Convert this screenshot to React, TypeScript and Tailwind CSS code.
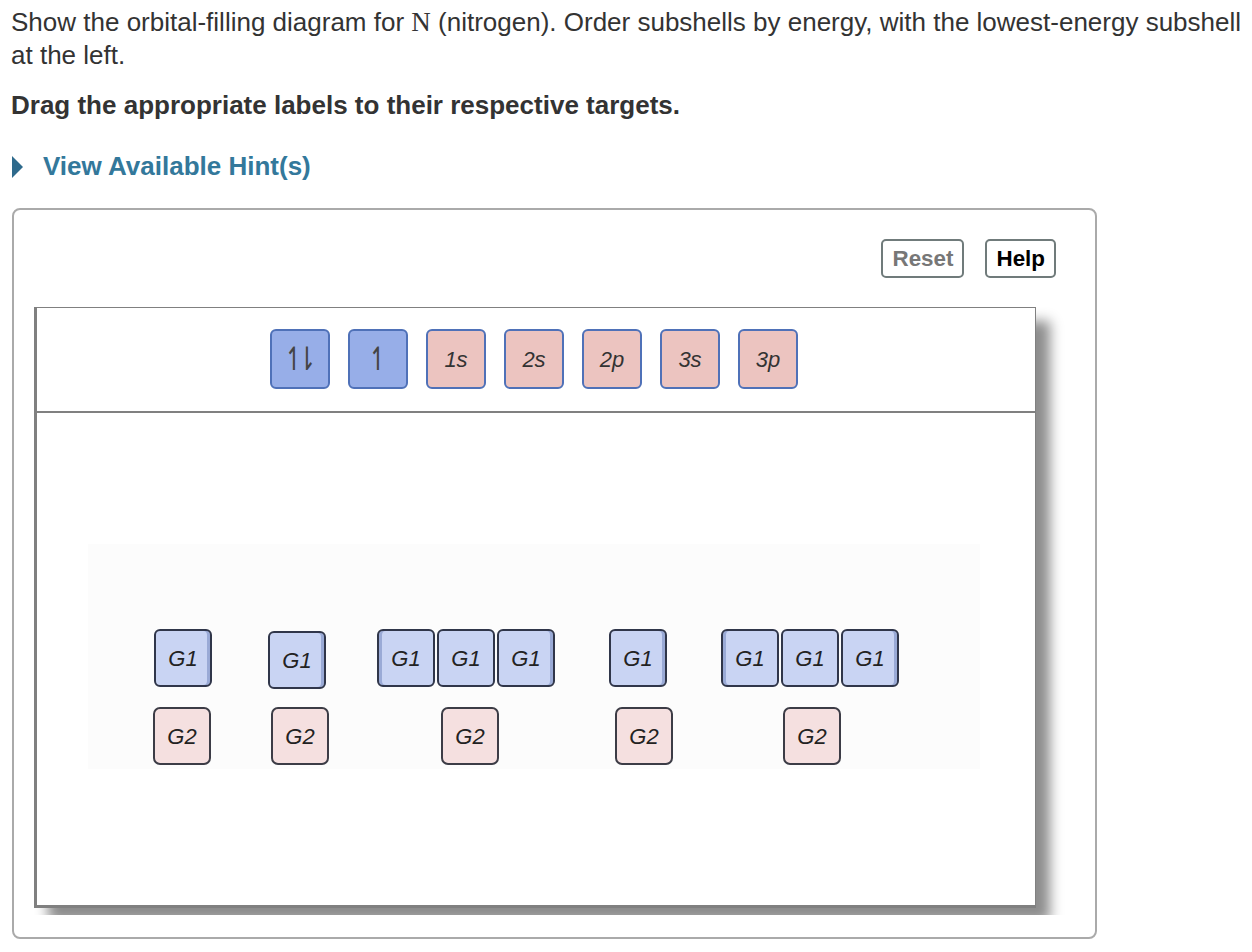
import React from 'react';

const sans = "font-['Liberation_Sans','Helvetica',Arial,sans-serif]";

function PaletteTile({ kind, children }: { kind: 'blue' | 'pink'; children: React.ReactNode }) {
  const fill = kind === 'blue' ? 'bg-[#97aee8]' : 'bg-[#ecc4c0]';
  return (
    <div
      className={`w-[60px] h-[60px] rounded-[6px] border-2 border-[#4f71b8] ${fill} flex items-center justify-center italic text-[22px] text-[#333]`}
    >
      {children}
    </div>
  );
}

// stripe: which inner edge gets the darker line
function G1({ stripe = 'right', className = '' }: { stripe?: 'left' | 'right' | 'none'; className?: string }) {
  const inset =
    stripe === 'right'
      ? 'shadow-[inset_-3px_0_0_#9aaad6]'
      : stripe === 'left'
      ? 'shadow-[inset_3px_0_0_#9aaad6]'
      : '';
  return (
    <div
      className={`w-[58px] h-[58px] shrink-0 rounded-[6px] border-2 border-[#30364a] bg-[#c9d4f3] ${inset} flex items-center justify-center italic text-[22px] text-[#222] ${className}`}
    >
      G1
    </div>
  );
}

function G2({ className = '' }: { className?: string }) {
  return (
    <div
      className={`w-[58px] h-[58px] shrink-0 rounded-[7px] border-2 border-[#3c3c46] bg-[#f5e0e0] flex items-center justify-center italic text-[22px] text-[#222] ${className}`}
    >
      G2
    </div>
  );
}

function G1Group({ className = '' }: { className?: string }) {
  return (
    <div className={`flex gap-[2px] ${className}`}>
      <G1 stripe="left" />
      <G1 stripe="none" />
      <G1 stripe="right" />
    </div>
  );
}

export default function App() {
  return (
    <div className={`w-[1252px] h-[952px] bg-white overflow-hidden text-[#333] ${sans}`}>
      <div className="pl-[11px] pt-[6px]">
        <p className="text-[26px] leading-[33px] whitespace-nowrap">
          Show the orbital-filling diagram for{' '}
          <span className="font-['Liberation_Serif','Times_New_Roman',serif] text-[27px]">N</span> (nitrogen). Order
          subshells by energy, with the lowest-energy subshell
          <br />
          at the left.
        </p>
        <p className="mt-[17px] text-[26px] leading-[33px] font-bold">
          Drag the appropriate labels to their respective targets.
        </p>
        <div className="mt-[28px] flex items-center h-[33px]">
          <svg width="11" height="22" viewBox="0 0 11 22" className="ml-[1px]">
            <polygon points="0,0 11,11 0,22" fill="#2e6a8c" />
          </svg>
          <span className="ml-[20px] text-[26px] font-bold text-[#33789b]">View Available Hint(s)</span>
        </div>
      </div>

      <div className="ml-[12px] mt-[25px] w-[1085px] h-[731px] border-2 border-[#aaaaaa] rounded-[8px]">
        <div className="flex justify-end gap-[21px] pt-[29px] pr-[39px]">
          <button className="h-[39px] px-[9px] rounded-[5px] border-2 border-[#707b7b] bg-white text-[22.4px] font-bold text-[#777]">
            Reset
          </button>
          <button className="h-[39px] px-[9px] rounded-[5px] border-2 border-[#707b7b] bg-white text-[22.4px] font-bold text-black">
            Help
          </button>
        </div>

        <div className="ml-[20px] mt-[29px] w-[1040px] h-[608px] overflow-hidden">
          <div className="w-[1002px] h-[601px] bg-white border-t border-r border-b-[3px] border-l-[3px] border-[#808080] shadow-[14px_14px_12px_rgba(0,0,0,0.45)]">
            <div className="h-[103px] flex justify-center gap-[18px] pt-[21px] pr-[4px]">
              <PaletteTile kind="blue">
                <span className="inline-block scale-y-[1.35] not-italic font-['DejaVu_Sans',sans-serif] font-extralight text-[24px] text-[#444] tracking-[-7px] pr-[7px]">
                  ↿⇂
                </span>
              </PaletteTile>
              <PaletteTile kind="blue">
                <span className="inline-block scale-y-[1.35] not-italic font-['DejaVu_Sans',sans-serif] font-extralight text-[24px] text-[#444]">
                  ↿
                </span>
              </PaletteTile>
              <PaletteTile kind="pink">1s</PaletteTile>
              <PaletteTile kind="pink">2s</PaletteTile>
              <PaletteTile kind="pink">2p</PaletteTile>
              <PaletteTile kind="pink">3s</PaletteTile>
              <PaletteTile kind="pink">3p</PaletteTile>
            </div>
            <div className="h-[2px] bg-[#808080]" />

            <div className="ml-[51px] mt-[131px] w-[892px] h-[225px] bg-[#fcfcfc] pt-[85px]">
              <div className="flex items-start">
                <G1 className="ml-[66px]" />
                <G1 className="ml-[56px] mt-[2px]" />
                <G1Group className="ml-[51px]" />
                <G1 className="ml-[54px]" />
                <G1Group className="ml-[54px]" />
              </div>
              <div className="flex mt-[18px]">
                <G2 className="ml-[65px]" />
                <G2 className="ml-[60px]" />
                <G2 className="ml-[112px]" />
                <G2 className="ml-[116px]" />
                <G2 className="ml-[110px]" />
              </div>
            </div>
          </div>
        </div>
      </div>
    </div>
  );
}
